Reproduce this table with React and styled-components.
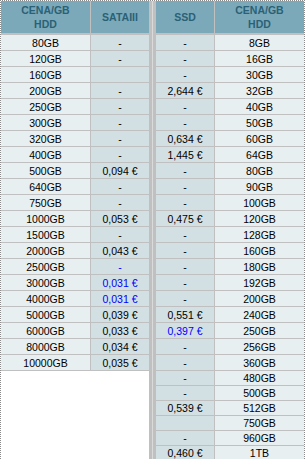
import React from "react";
import styled, { createGlobalStyle } from "styled-components";

const Global = createGlobalStyle`
  html, body { margin: 0; padding: 0; background: #fff; }
  body { font-family: "Liberation Sans", Arial, sans-serif; }
`;

const Frame = styled.div`
  width: 305px;
  height: 459px;
  box-sizing: border-box;
  display: flex;
  align-items: flex-start;
  overflow: hidden;
  background: #fff;
  border-top: 1px dotted #8a8a8a;
  border-left: 1px dotted #8a8a8a;
  border-right: 1px dotted #8a8a8a;
`;

const Panel = styled.div`
  display: grid;
  grid-template-columns: ${(p) => p.$cols};
  gap: 1px;
  padding-bottom: 1px;
  background: #c0c0c0;
  flex: none;
`;

const Divider = styled.div`
  flex: none;
  width: 7px;
  align-self: stretch;
  background: linear-gradient(
    to right,
    #c0c0c0 0 3px,
    #dadada 3px 4px,
    #c0c0c0 4px 7px
  );
`;

const HeadCell = styled.div`
  height: 32px;
  border-bottom: 1px solid #c0c0c0;
  background: #7ba9b9;
  color: #2b6176;
  font-weight: bold;
  font-size: 10.5px;
  line-height: 14px;
  display: flex;
  align-items: center;
  justify-content: center;
  text-align: center;
`;

const Cell = styled.div`
  height: ${(p) => (p.$compact ? 14 : 15)}px;
  background: ${(p) => (p.$shade ? "#d2dfe3" : "#e8eff0")};
  color: ${(p) => (p.$blue ? "#0000ff" : "#000")};
  font-size: 10.5px;
  line-height: 15px;
  display: flex;
  align-items: center;
  justify-content: center;
  padding-top: 1px;
  box-sizing: border-box;
  white-space: nowrap;
`;

const hdd = [
  ["80GB", "-"],
  ["120GB", "-"],
  ["160GB", ""],
  ["200GB", "-"],
  ["250GB", "-"],
  ["300GB", "-"],
  ["320GB", "-"],
  ["400GB", "-"],
  ["500GB", "0,094 €"],
  ["640GB", "-"],
  ["750GB", "-"],
  ["1000GB", "0,053 €"],
  ["1500GB", "-"],
  ["2000GB", "0,043 €"],
  ["2500GB", "-", true],
  ["3000GB", "0,031 €", true],
  ["4000GB", "0,031 €", true],
  ["5000GB", "0,039 €"],
  ["6000GB", "0,033 €"],
  ["8000GB", "0,034 €"],
  ["10000GB", "0,035 €"],
];

const ssd = [
  ["-", "8GB"],
  ["-", "16GB"],
  ["-", "30GB"],
  ["2,644 €", "32GB"],
  ["-", "40GB"],
  ["-", "50GB"],
  ["0,634 €", "60GB"],
  ["1,445 €", "64GB"],
  ["-", "80GB"],
  ["-", "90GB"],
  ["-", "100GB"],
  ["0,475 €", "120GB"],
  ["-", "128GB"],
  ["-", "160GB"],
  ["-", "180GB"],
  ["-", "192GB"],
  ["-", "200GB"],
  ["0,551 €", "240GB"],
  ["0,397 €", "250GB", true],
  ["-", "256GB"],
  ["-", "360GB"],
  ["-", "480GB"],
  ["-", "500GB"],
  ["0,539 €", "512GB"],
  ["", "750GB"],
  ["-", "960GB"],
  ["0,460 €", "1TB"],
];

export default function App() {
  return (
    <>
      <Global />
      <Frame>
        <Panel $cols="89px 58px">
          <HeadCell>
            CENA/GB
            <br />
            HDD
          </HeadCell>
          <HeadCell $shade>SATAIII</HeadCell>
          {hdd.map(([size, price, blue]) => (
            <React.Fragment key={size}>
              <Cell>{size}</Cell>
              <Cell $shade $blue={blue}>
                {price}
              </Cell>
            </React.Fragment>
          ))}
        </Panel>
        <Divider />
        <Panel $cols="58px 89px">
          <HeadCell $shade>SSD</HeadCell>
          <HeadCell>
            CENA/GB
            <br />
            HDD
          </HeadCell>
          {ssd.map(([price, size, blue], i) => (
            <React.Fragment key={size}>
              <Cell $shade $blue={blue} $compact={i > 20}>
                {price}
              </Cell>
              <Cell $compact={i > 20}>{size}</Cell>
            </React.Fragment>
          ))}
        </Panel>
      </Frame>
    </>
  );
}
